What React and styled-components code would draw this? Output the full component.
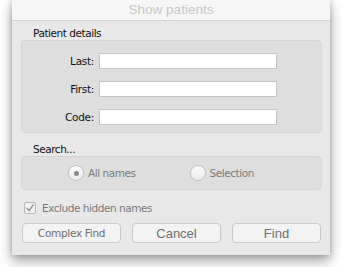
import React from 'react';
import styled, { createGlobalStyle } from 'styled-components';

const GlobalStyle = createGlobalStyle`
  body {
    margin: 0;
    background: #ffffff;
    font-family: "Liberation Sans", Arial, sans-serif;
  }
`;

export default function App() {
  return (
    <>
      <GlobalStyle />
      <Stage>
        <Window>
          <TitleBar>Show patients</TitleBar>
          <Body>
            <SectionLabel>Patient details</SectionLabel>
            <GroupBox>
              <FieldGrid>
                <FieldLabel>Last:</FieldLabel>
                <TextField />
                <FieldLabel>First:</FieldLabel>
                <TextField />
                <FieldLabel>Code:</FieldLabel>
                <TextField />
              </FieldGrid>
            </GroupBox>
            <SectionLabel $top={10}>Search...</SectionLabel>
            <GroupBox>
              <RadioRow>
                <RadioOption $left={46}>
                  <Radio $checked />
                  All names
                </RadioOption>
                <RadioOption $left={54}>
                  <Radio />
                  Selection
                </RadioOption>
              </RadioRow>
            </GroupBox>
            <CheckRow>
              <CheckBox>
                <svg width="10" height="10" viewBox="0 0 10 10">
                  <path d="M2 5.2 L4.2 7.6 L8.2 1.8" fill="none" stroke="#8a8a8a" strokeWidth="1.3" strokeLinecap="round" strokeLinejoin="round" />
                </svg>
              </CheckBox>
              Exclude hidden names
            </CheckRow>
            <ButtonRow>
              <Button $w={99} $lucida>Complex Find</Button>
              <Button $w={89}>Cancel</Button>
              <Button $w={89}>Find</Button>
            </ButtonRow>
          </Body>
        </Window>
      </Stage>
    </>
  );
}

const Stage = styled.div`
  width: 342px;
  height: 267px;
  overflow: hidden;
  padding-left: 12px;
  box-sizing: border-box;
`;

const Window = styled.div`
  width: 318px;
  height: 255px;
  background: #e8e8e8;
  box-shadow: 0 6px 12px rgba(0, 0, 0, 0.35), 0 0 6px rgba(0, 0, 0, 0.2);
  display: flex;
  flex-direction: column;
`;

const TitleBar = styled.div`
  height: 20px;
  background: #f6f6f6;
  border-bottom: 1px solid #d3d3d3;
  color: #c6c6c6;
  font-family: "Liberation Sans", Arial, sans-serif;
  font-size: 13.5px;
  line-height: 20px;
  text-align: center;
`;

const Body = styled.div`
  padding: 0 8px 0 9px;
  display: flex;
  flex-direction: column;
`;

const SectionLabel = styled.div`
  font-family: "DejaVu Sans", sans-serif;
  font-size: 10.5px;
  letter-spacing: -0.45px;
  color: #111;
  line-height: 13px;
  margin-top: ${(p) => p.$top ?? 6}px;
  padding-left: 12px;
`;

const GroupBox = styled.div`
  background: #dedede;
  border: 1px solid #d6d6d6;
  border-radius: 4px;
`;

const FieldGrid = styled.div`
  display: grid;
  grid-template-columns: 72px 178px;
  column-gap: 5px;
  row-gap: 12px;
  padding: 12px 0 7px 0;
  align-items: center;
`;

const FieldLabel = styled.div`
  font-family: "DejaVu Sans", sans-serif;
  font-size: 10.5px;
  letter-spacing: -0.3px;
  color: #111;
  text-align: right;
`;

const TextField = styled.div`
  height: 16px;
  box-sizing: border-box;
  background: #ffffff;
  border: 1px solid #c4c4c4;
`;

const RadioRow = styled.div`
  height: 32px;
  display: flex;
  align-items: center;
`;

const RadioOption = styled.div`
  display: flex;
  align-items: center;
  gap: 4px;
  margin-left: ${(p) => p.$left}px;
  font-family: "DejaVu Sans", sans-serif;
  font-size: 10.5px;
  letter-spacing: -0.45px;
  color: #7a7a7a;
`;

const Radio = styled.span`
  width: 16px;
  height: 16px;
  box-sizing: border-box;
  border-radius: 50%;
  border: 1px solid #c2c2c2;
  background: linear-gradient(#fafafa, #ececec);
  display: flex;
  align-items: center;
  justify-content: center;
  &::after {
    content: '';
    width: 5px;
    height: 5px;
    border-radius: 50%;
    background: #8a8a8a;
    display: ${(p) => (p.$checked ? 'block' : 'none')};
  }
`;

const CheckRow = styled.div`
  display: flex;
  align-items: center;
  gap: 6px;
  margin-top: 12px;
  padding-left: 3px;
  font-family: "DejaVu Sans", sans-serif;
  font-size: 10.5px;
  letter-spacing: -0.45px;
  color: #7a7a7a;
`;

const CheckBox = styled.span`
  width: 12px;
  height: 12px;
  box-sizing: border-box;
  border: 1px solid #b8b8b8;
  border-radius: 2px;
  background: #f2f2f2;
  display: flex;
  align-items: center;
  justify-content: center;
`;

const ButtonRow = styled.div`
  display: flex;
  gap: 11px;
  margin-top: 9px;
  padding-left: 1px;
`;

const Button = styled.div`
  width: ${(p) => p.$w}px;
  height: 20px;
  box-sizing: border-box;
  background: #f3f3f3;
  border: 1px solid #c9c9c9;
  border-radius: 4px;
  display: flex;
  align-items: center;
  justify-content: center;
  font-family: ${(p) => (p.$lucida ? '"DejaVu Sans", sans-serif' : '"Liberation Sans", Arial, sans-serif')};
  font-size: ${(p) => (p.$lucida ? '10.5px' : '13px')};
  letter-spacing: ${(p) => (p.$lucida ? '-0.3px' : '0')};
  color: #6e6e6e;
`;
